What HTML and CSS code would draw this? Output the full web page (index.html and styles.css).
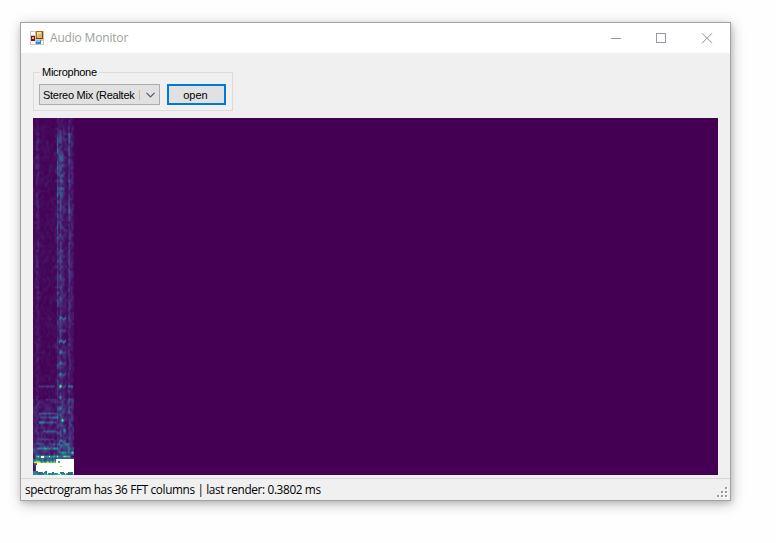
FILE: index.html
```html
<!DOCTYPE html>
<html lang="en">
<head>
<meta charset="utf-8">
<title>Audio Monitor</title>
<link rel="stylesheet" href="styles.css">
</head>
<body>
<main class="window">
  <header class="titlebar">
    <svg class="app-icon" width="14" height="14" viewBox="0 0 14 14" shape-rendering="crispEdges">
      <path fill="#c3c8c8" d="M0 0h14v14H0z"/>
      <path fill="#fff" d="M1 1h4v3H1zM1 10h4v3H1zM6 10h7v3H6z"/>
      <path fill="#a26a20" d="M6 0h7v8H6z"/>
      <path fill="#8b3a10" d="M12 1h1v7H6V7h6z"/>
      <path fill="#dfb85c" d="M7 1h5v6H7z"/>
      <path fill="#f5dc94" d="M7 1h4v2H8v2H7z"/>
      <path fill="#7b160c" d="M1 5h4v5H1z"/>
      <path fill="#e8b45c" d="M2 6h2v2H2z"/>
      <path fill="#3487c8" d="M6 9h5v4H6z"/>
      <path fill="#83c5f2" d="M6 9h4v2H6z"/>
    </svg>
    <h1 class="title">Audio Monitor</h1>
    <svg class="controls" width="102" height="11" viewBox="0 0 102 11" fill="none" stroke="#9696a4">
      <path d="M0 5.5h10M45.5.5h9v9h-9z" shape-rendering="crispEdges"/>
      <path d="M91 .2l10 10M101 .2l-10 10"/>
    </svg>
  </header>
  <section class="client">
    <fieldset class="group">
      <legend class="legend">Microphone</legend>
      <div class="combo">
        <span class="combo-text">Stereo Mix (Realtek</span>
        <i class="cut"></i>
        <svg class="chevron" width="9" height="6" viewBox="0 0 9 6" fill="none" stroke="#505a70" stroke-width="1.2"><path d="M.5.8l4 4 4-4"/></svg>
      </div>
      <button class="open">open</button>
    </fieldset>
    <div class="plot"><canvas id="spectrogram" width="41" height="357"></canvas></div>
  </section>
  <footer class="status">
    <span class="status-text">spectrogram has 36 FFT columns | last render: 0.3802 ms</span>
    <svg class="grip" width="12" height="12" viewBox="0 0 12 12" shape-rendering="crispEdges">
      <path fill="#fff" d="M9 1h2v2H9zM5 5h2v2H5zM9 5h2v2H9zM1 9h2v2H1zM5 9h2v2H5zM9 9h2v2H9z"/>
      <path fill="#9c9ca8" d="M8 0h2v2H8zM4 4h2v2H4zM8 4h2v2H8zM0 8h2v2H0zM4 8h2v2H4zM8 8h2v2H8z"/>
    </svg>
  </footer>
</main>
<script src="spectrogram.js"></script>
</body>
</html>
```
FILE: styles.css
```css
* { box-sizing: border-box; }
body {
  margin: 0;
  height: 543px;
  padding: 22px 0 0 20px;
  background: #fefefe;
  color: #000;
  font: 11px/14px "Liberation Sans", Arial, sans-serif;
  overflow: hidden;
}
.window {
  display: flex;
  flex-direction: column;
  width: 711px;
  height: 479px;
  border: 1px solid #a3a3a3;
  background: #f0f0f0;
  box-shadow: 1px 3px 13px rgba(0, 0, 0, .24), 1px 2px 5px rgba(0, 0, 0, .14);
}
.titlebar {
  display: flex;
  align-items: center;
  height: 30px;
  padding: 0 17px 0 9px;
  background: #fff;
}
.app-icon { margin-right: 6px; }
.title {
  margin: 0;
  color: #9ba397;
  font: 12px/16px "Open Sans", "Noto Sans", sans-serif;
  letter-spacing: -.18px;
}
.controls { margin-left: auto; }
.client { height: 425px; padding: 12px 12px 0; }
.group {
  display: flex;
  gap: 7px;
  width: 200px;
  height: 46px;
  margin: 0 0 7px;
  padding: 5px 5px 0;
  border: 1px solid #dcdcdc;
}
.legend { height: 14px; margin-left: 1px; padding: 0 2px; letter-spacing: -.27px; }
.combo {
  display: flex;
  align-items: center;
  width: 121px;
  height: 21px;
  padding: 0 4px 0 3px;
  border: 1px solid #adadad;
  background: #e1e1e1;
  white-space: nowrap;
}
.combo-text { width: 96px; letter-spacing: -.27px; }
.cut { width: 1px; height: 10px; background: #d3bd8a; }
.chevron { margin-left: auto; }
.open {
  width: 59px;
  height: 21px;
  padding: 0 2px 0 0;
  border: 2px solid #0078d7;
  background: #e1e1e1;
  color: #000;
  font: inherit;
}
.plot { width: 685px; height: 357px; background: #440154; }
.plot canvas { display: block; }
.status {
  display: flex;
  justify-content: space-between;
  height: 22px;
  padding: 0 1px 0 4px;
  border-top: 1px solid #d7d7d7;
}
.status-text {
  font: 11.8px/21px "Open Sans", "Noto Sans", sans-serif;
  letter-spacing: -.36px;
  white-space: nowrap;
}
.grip { margin-top: 8px; }
```
FILE: spectrogram.js
```js
const canvas = document.getElementById('spectrogram');
const ctx = canvas.getContext('2d');
const W = canvas.width, H = canvas.height;
const viridis = [[68,1,84],[72,36,117],[65,68,135],[53,95,141],[42,120,142],[33,145,140],[34,168,132],[68,191,112],[122,209,81],[189,223,38],[253,231,37]];
let seed = 7;
const rand = () => (seed = (seed * 16807) % 2147483647) / 2147483647;

// Smooth noise on a coarse grid, taller than it is wide.
const grid = Array.from({ length: 200 }, () => Array.from({ length: 30 }, rand));
const noise = (x, y) => {
  const gx = x / 1.6, gy = y / 2.6, i = gx | 0, j = gy | 0, u = gx - i, v = gy - j;
  return (grid[j][i] * (1 - u) + grid[j][i + 1] * u) * (1 - v) + (grid[j + 1][i] * (1 - u) + grid[j + 1][i + 1] * u) * v;
};
const bell = (d, s) => Math.exp(-d * d / (2 * s * s));

// Vertical streaks: x, sigma, gain.
const streaks = [[4, 1.2, .1], [24.2, .5, .24], [27, 1.2, .2], [30, 1.5, .09], [35.7, .7, .24], [38, 1.1, .07]];
// Horizontal harmonics: y, x start, x end, level.
const lines = [[268, 6, 21, .14], [268, 35, 39, .25], [295, 6, 23, .22], [299, 7, 24, .18], [304, 6, 10, .3], [304, 9, 23, .2],
  [313, 10, 23, .18], [321, 5, 20, .11], [330, 4, 24, .3], [330, 5, 11, .2], [334, 25, 40, .2], [338, 3, 36, .4],
  [339, 5, 20, .25], [341, 24, 36, .2], [344, 1, 40, .5], [326, 20, 34, .14]];
// Bright spots: x, y, level.
const dots = [[27, 268, .7], [27, 279, .45], [27, 290, .35], [29, 302, .72], [31, 312, .52], [30, 334, .42], [39, 334, .5],
  [8, 304, .15], [27, 256, .2], [27, 245, .2], [27, 234, .25]];
// Curved harmonics: y, level.
const waves = [[200, .26], [212, .14], [223, .34], [234, .12], [245, .1], [256, .16], [268, .1], [323, .25]];

const image = ctx.createImageData(W, H);
for (let y = 0; y < H; y++) {
  for (let x = 0; x < W; x++) {
    const n = noise(x, y);
    let m = (x < 22 ? .005 + .055 * n * n : .01 + .08 * n * n) * (y < 8 ? .5 : 1);
    const fade = y < 15 ? .4 : y < 100 ? 1 : y < 190 ? .8 : .6;
    for (const [sx, s, g] of streaks) m += g * bell(x - sx, s) * fade * (.2 + n);
    if (y > 35 && y < 75) m += .16 * bell(x - 28, 2) * n;
    for (const [ly, a, b, g] of lines) if (x >= a && x <= b) m += g * bell(y - ly, .8) * (.55 + .7 * n);
    for (const [dx, dy, g] of dots) m += g * bell(x - dx, .9) * bell(y - dy, 1.1);
    if (x > 25 && x < 33) for (const [wy, g] of waves) m += g * bell(y - wy - .9 * Math.cos((x - 25) * 1.2), .9);
    if (y > 280) m += .08 * n;
    if (y > 324) m += .14 * n;
    let white = false;
    if (y >= 345 && y <= 352) white = x > 1 + n * 3;
    if (y >= 341 && y < 345) { white = x >= 28 || (x > 22 && n > .5); m += .3 * n; }
    if (y > 352) { white = x > 4 && n > .15 + (y - 353) * .24; m = .2 + .65 * n; }
    if ((y === 338 || y === 339) && x > 5 && x < 20 && n > .58) white = true;
    if (y === 348 && x > 26 && x < 29) { white = false; m = .9; }
    m = Math.max(0, Math.min(.999, m));
    const p = m * 10, k = p | 0, t = p - k;
    const o = (y * W + x) * 4;
    for (let c = 0; c < 3; c++) image.data[o + c] = white ? 255 : viridis[k][c] * (1 - t) + viridis[k + 1][c] * t;
    image.data[o + 3] = 255;
  }
}
ctx.putImageData(image, 0, 0);
```
